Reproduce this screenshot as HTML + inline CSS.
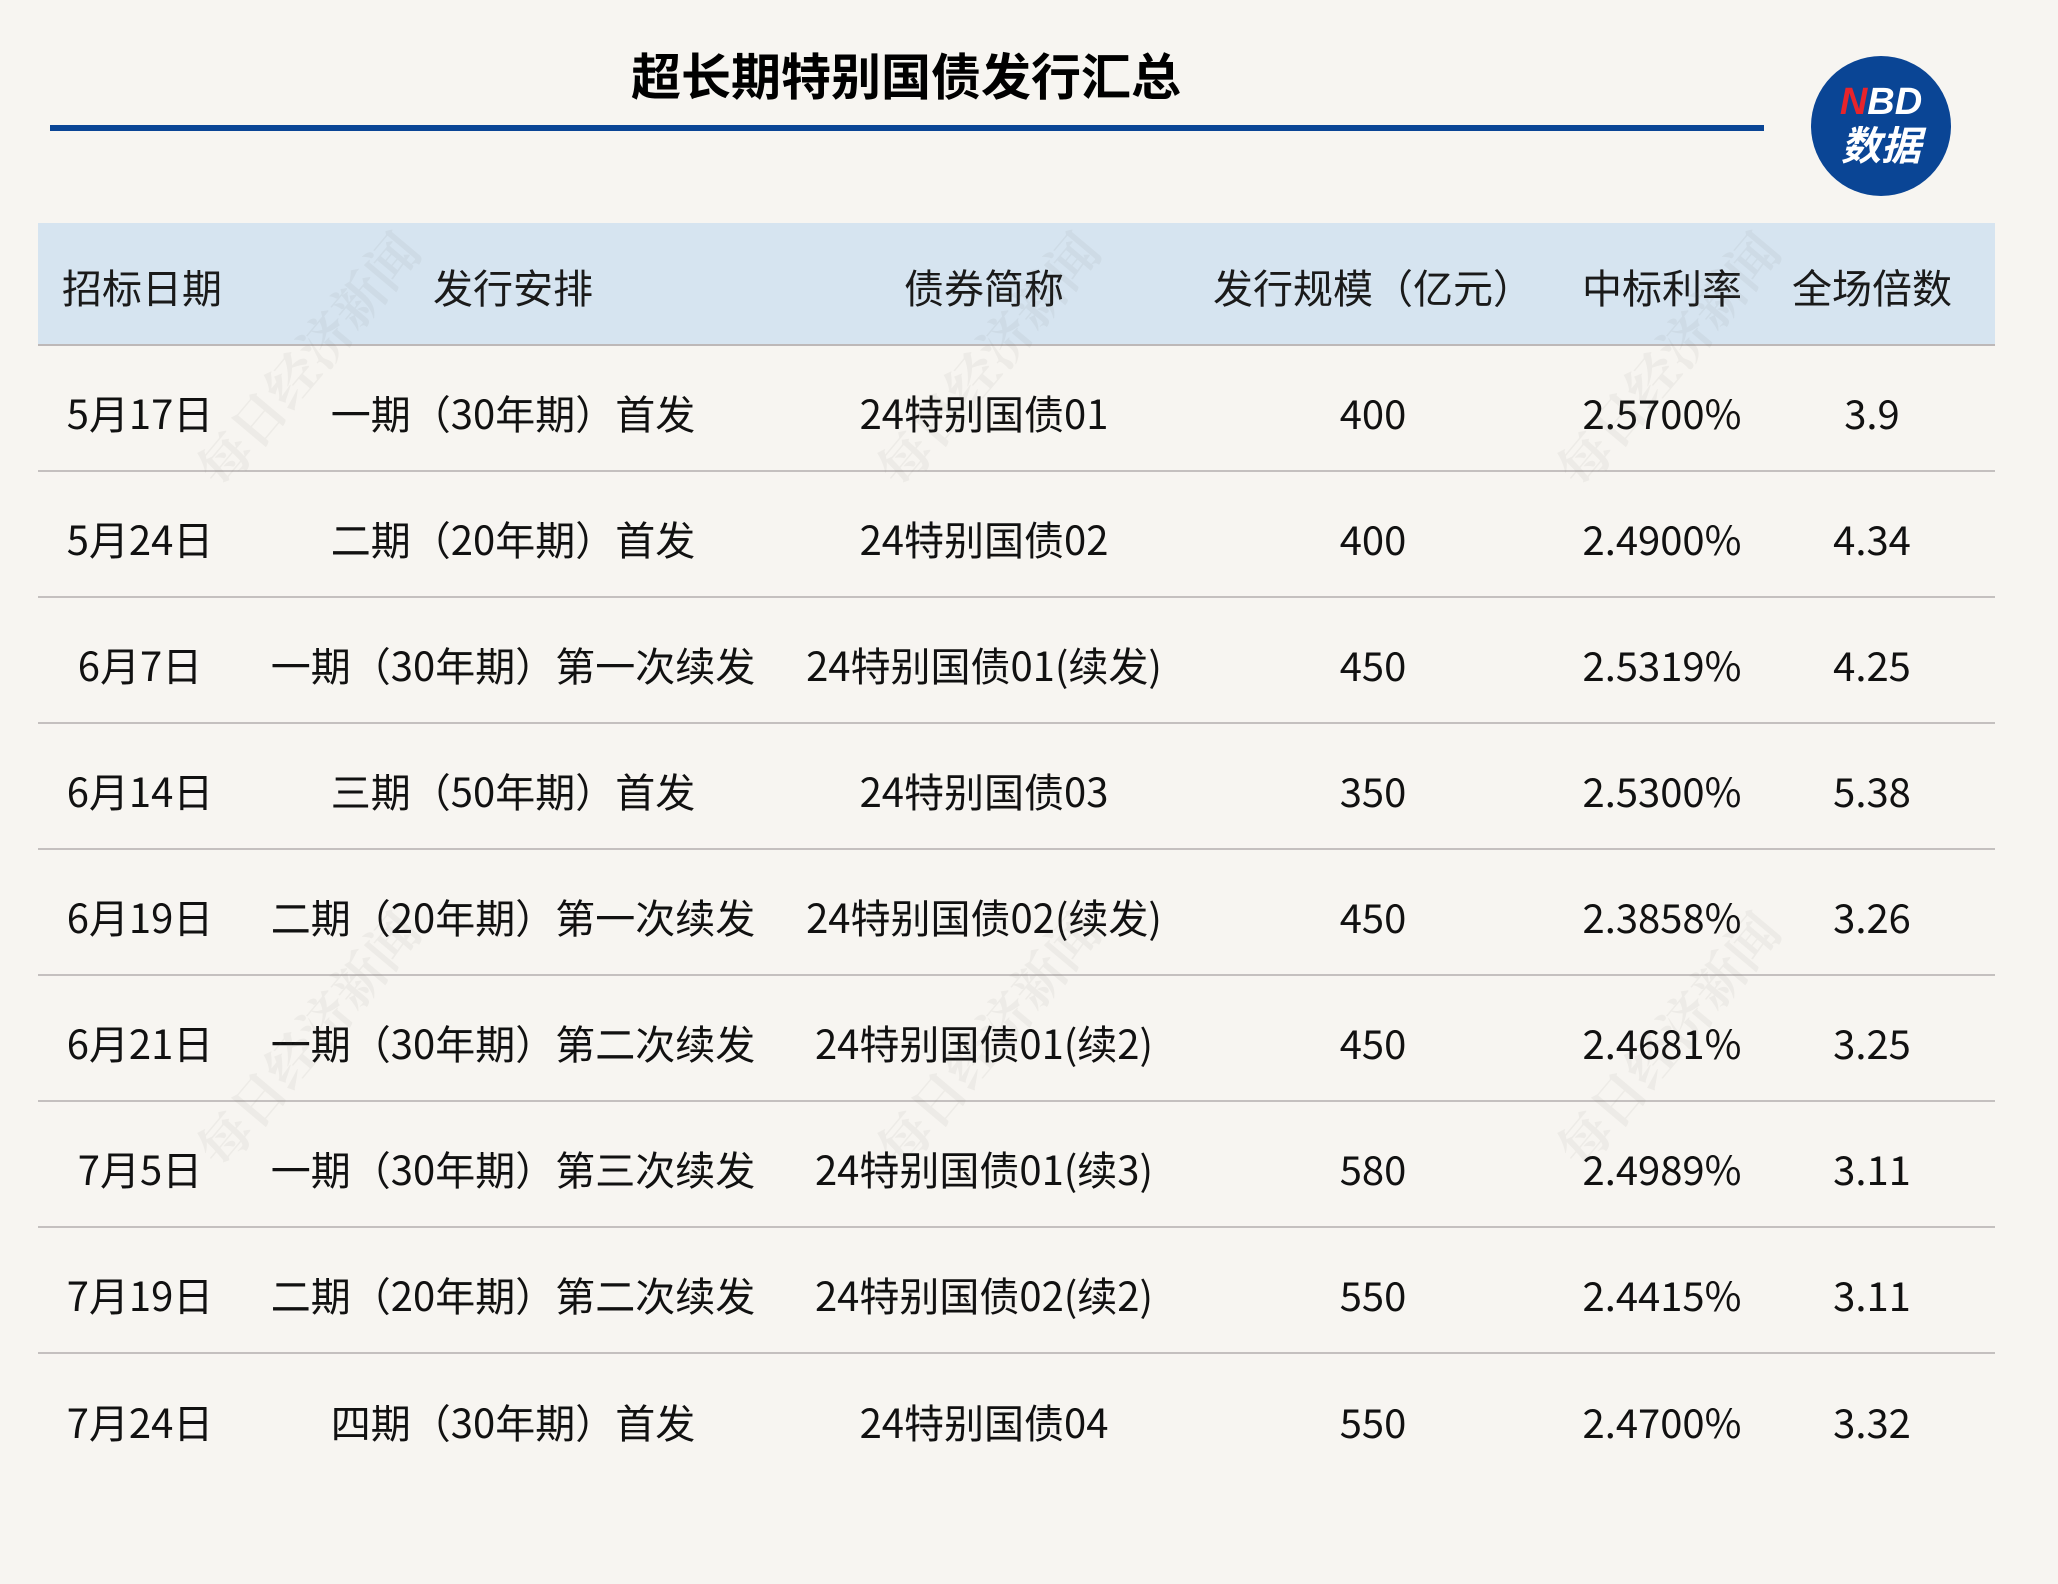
<!DOCTYPE html>
<html><head><meta charset="utf-8"><style>
*{margin:0;padding:0;box-sizing:border-box}
body{width:2058px;height:1584px;background:#f7f5f1;position:relative;overflow:hidden;font-family:"Liberation Sans","Noto Sans CJK SC",sans-serif;color:#111}
.title{position:absolute;left:0;width:1812px;top:38px;text-align:center;font-size:50px;font-weight:bold;font-family:"Noto Sans CJK SC",sans-serif;color:#000;letter-spacing:0px}
.bar{position:absolute;left:50px;top:125px;width:1714px;height:6px;background:#0a4595}
.logo{position:absolute;left:1811px;top:56px;width:140px;height:140px;border-radius:50%;background:#0a4595;color:#fff;text-align:center;font-weight:bold;font-style:italic}
.logo .a{position:absolute;top:26px;left:0;width:100%;font-size:38px;line-height:40px;font-family:"Liberation Sans",sans-serif}
.logo .a span{color:#e8242b}
.logo .b{position:absolute;top:64px;left:0;width:100%;font-size:40px;line-height:46px;font-family:"Noto Sans CJK SC",sans-serif}
.head{position:absolute;left:38px;top:223px;width:1957px;height:123px;background:#d6e4f0;border-bottom:2px solid #bdb8b8}
.row{position:absolute;left:38px;width:1957px;height:126px;border-bottom:2px solid #c4c0bf}
.c{position:absolute;top:4px;height:100%;display:flex;align-items:center;justify-content:center;white-space:nowrap;font-size:40px;font-family:"Noto Sans CJK SC",sans-serif;color:#111}
.head .c{color:#1a1a1a;top:2px}
.wm{position:absolute;font-size:52px;color:rgba(120,110,100,0.07);transform:rotate(-50deg);font-family:"Noto Serif CJK SC",serif;font-weight:bold;white-space:nowrap}
</style></head><body>
<div class="title">超长期特别国债发行汇总</div>
<div class="bar"></div>
<div class="logo"><div class="a"><span>N</span>BD</div><div class="b">数据</div></div>

<div class="head">
<div class="c" style="left:24px;justify-content:flex-start">招标日期</div>
<div class="c" style="left:475px;width:0">发行安排</div>
<div class="c" style="left:946px;width:0">债券简称</div>
<div class="c" style="left:1335px;width:0">发行规模（亿元）</div>
<div class="c" style="left:1624px;width:0">中标利率</div>
<div class="c" style="left:1834px;width:0">全场倍数</div>
</div>

<div class="row" style="top:346px"><div class="c" style="left:102px;width:0">5月17日</div><div class="c" style="left:475px;width:0">一期（30年期）首发</div><div class="c" style="left:946px;width:0">24特别国债01</div><div class="c" style="left:1335px;width:0">400</div><div class="c" style="left:1624px;width:0">2.5700%</div><div class="c" style="left:1834px;width:0">3.9</div></div>
<div class="row" style="top:472px"><div class="c" style="left:102px;width:0">5月24日</div><div class="c" style="left:475px;width:0">二期（20年期）首发</div><div class="c" style="left:946px;width:0">24特别国债02</div><div class="c" style="left:1335px;width:0">400</div><div class="c" style="left:1624px;width:0">2.4900%</div><div class="c" style="left:1834px;width:0">4.34</div></div>
<div class="row" style="top:598px"><div class="c" style="left:102px;width:0">6月7日</div><div class="c" style="left:475px;width:0">一期（30年期）第一次续发</div><div class="c" style="left:946px;width:0">24特别国债01(续发)</div><div class="c" style="left:1335px;width:0">450</div><div class="c" style="left:1624px;width:0">2.5319%</div><div class="c" style="left:1834px;width:0">4.25</div></div>
<div class="row" style="top:724px"><div class="c" style="left:102px;width:0">6月14日</div><div class="c" style="left:475px;width:0">三期（50年期）首发</div><div class="c" style="left:946px;width:0">24特别国债03</div><div class="c" style="left:1335px;width:0">350</div><div class="c" style="left:1624px;width:0">2.5300%</div><div class="c" style="left:1834px;width:0">5.38</div></div>
<div class="row" style="top:850px"><div class="c" style="left:102px;width:0">6月19日</div><div class="c" style="left:475px;width:0">二期（20年期）第一次续发</div><div class="c" style="left:946px;width:0">24特别国债02(续发)</div><div class="c" style="left:1335px;width:0">450</div><div class="c" style="left:1624px;width:0">2.3858%</div><div class="c" style="left:1834px;width:0">3.26</div></div>
<div class="row" style="top:976px"><div class="c" style="left:102px;width:0">6月21日</div><div class="c" style="left:475px;width:0">一期（30年期）第二次续发</div><div class="c" style="left:946px;width:0">24特别国债01(续2)</div><div class="c" style="left:1335px;width:0">450</div><div class="c" style="left:1624px;width:0">2.4681%</div><div class="c" style="left:1834px;width:0">3.25</div></div>
<div class="row" style="top:1102px"><div class="c" style="left:102px;width:0">7月5日</div><div class="c" style="left:475px;width:0">一期（30年期）第三次续发</div><div class="c" style="left:946px;width:0">24特别国债01(续3)</div><div class="c" style="left:1335px;width:0">580</div><div class="c" style="left:1624px;width:0">2.4989%</div><div class="c" style="left:1834px;width:0">3.11</div></div>
<div class="row" style="top:1228px"><div class="c" style="left:102px;width:0">7月19日</div><div class="c" style="left:475px;width:0">二期（20年期）第二次续发</div><div class="c" style="left:946px;width:0">24特别国债02(续2)</div><div class="c" style="left:1335px;width:0">550</div><div class="c" style="left:1624px;width:0">2.4415%</div><div class="c" style="left:1834px;width:0">3.11</div></div>
<div class="row" style="top:1354px;border-bottom:none"><div class="c" style="left:102px;width:0">7月24日</div><div class="c" style="left:475px;width:0">四期（30年期）首发</div><div class="c" style="left:946px;width:0">24特别国债04</div><div class="c" style="left:1335px;width:0">550</div><div class="c" style="left:1624px;width:0">2.4700%</div><div class="c" style="left:1834px;width:0">3.32</div></div>

<div class="wm" style="left:150px;top:320px">每日经济新闻</div>
<div class="wm" style="left:830px;top:320px">每日经济新闻</div>
<div class="wm" style="left:1510px;top:320px">每日经济新闻</div>
<div class="wm" style="left:150px;top:1000px">每日经济新闻</div>
<div class="wm" style="left:830px;top:1000px">每日经济新闻</div>
<div class="wm" style="left:1510px;top:1000px">每日经济新闻</div>
</body></html>
